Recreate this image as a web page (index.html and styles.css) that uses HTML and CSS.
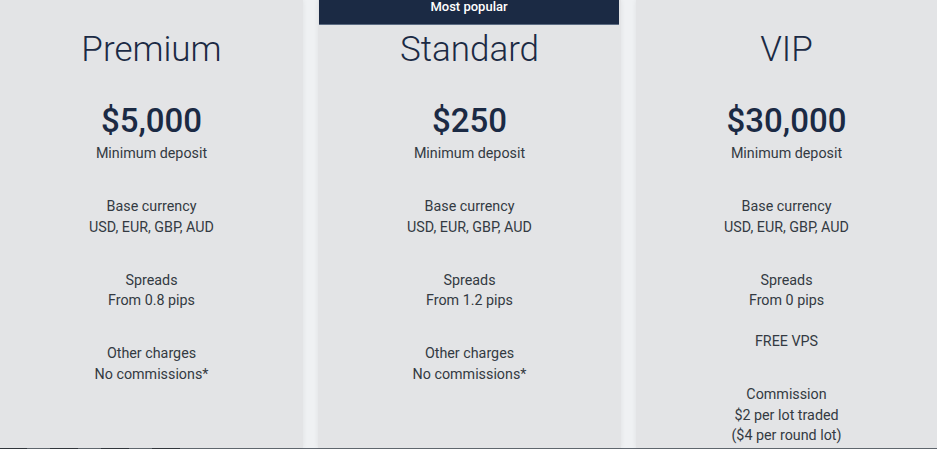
FILE: index.html
```html
<!DOCTYPE html>
<html>
<head>
<meta charset="utf-8">
<link rel="stylesheet" href="styles.css">
</head>
<body>
<div class="plans">
  <section class="plan plan-first">
    <h2 class="plan-name">Premium</h2>
    <div class="price">$5,000</div>
    <p class="price-label">Minimum deposit</p>
    <p class="feature">Base currency<br>USD, EUR, GBP, AUD</p>
    <p class="feature">Spreads<br>From 0.8 pips</p>
    <p class="feature">Other charges<br>No commissions*</p>
  </section>
  <section class="plan plan-popular">
    <div class="badge">Most popular</div>
    <h2 class="plan-name">Standard</h2>
    <div class="price">$250</div>
    <p class="price-label">Minimum deposit</p>
    <p class="feature">Base currency<br>USD, EUR, GBP, AUD</p>
    <p class="feature">Spreads<br>From 1.2 pips</p>
    <p class="feature">Other charges<br>No commissions*</p>
  </section>
  <section class="plan plan-last">
    <h2 class="plan-name">VIP</h2>
    <div class="price">$30,000</div>
    <p class="price-label">Minimum deposit</p>
    <p class="feature">Base currency<br>USD, EUR, GBP, AUD</p>
    <p class="feature">Spreads<br>From 0 pips</p>
    <p class="feature feature-tight">FREE VPS</p>
    <p class="feature">Commission<br>$2 per lot traded<br>($4 per round lot)</p>
  </section>
</div>
<div class="bottom-line"><span class="seg"></span><span class="seg"></span><span class="seg"></span><span class="seg"></span></div>
</body>
</html>
```

FILE: styles.css
```css
html, body {
  margin: 0;
  padding: 0;
}
body {
  width: 937px;
  height: 449px;
  overflow: hidden;
  background: #eff1f3;
  font-family: Roboto, "Liberation Sans", Arial, sans-serif;
  color: #333a42;
}
.plans {
  display: flex;
  height: 448px;
}
.plan {
  background: #e3e4e6;
  box-shadow: 0 0 5px rgba(0, 0, 0, 0.07);
  text-align: center;
  padding-top: 26px;
  box-sizing: border-box;
  position: relative;
}
.plan-first { flex: 0 0 303px; }
.plan-popular { flex: 0 0 303px; margin-left: 15px; }
.plan-last { flex: 1; margin-left: 15px; }
.badge {
  position: absolute;
  top: 0;
  left: 1px;
  right: 2px;
  height: 24px;
  background: #1b2a44;
  border-bottom: 1px solid #5b6b82;
  color: #fff;
  font-size: 13px;
  font-weight: 500;
  line-height: 13px;
}
.plan-name {
  margin: 0;
  font-size: 35px;
  font-weight: 300;
  line-height: 48px;
  color: #1b2a44;
}
.price {
  margin-top: 27px;
  font-size: 33px;
  font-weight: 500;
  line-height: 40px;
  color: #1b2a44;
}
.price-label {
  margin: 2px 0 0;
  font-size: 14.3px;
  line-height: 20.5px;
}
.feature {
  margin: 32.5px 0 0;
  font-size: 14.3px;
  line-height: 20.5px;
}
.feature-tight {
  margin-top: 20.5px;
}
.bottom-line {
  display: flex;
  height: 1px;
  background: #626971;
}
.seg {
  width: 28px;
  background: #33383e;
  margin-right: 23px;
}
.seg:first-child { width: 27px; }
```
